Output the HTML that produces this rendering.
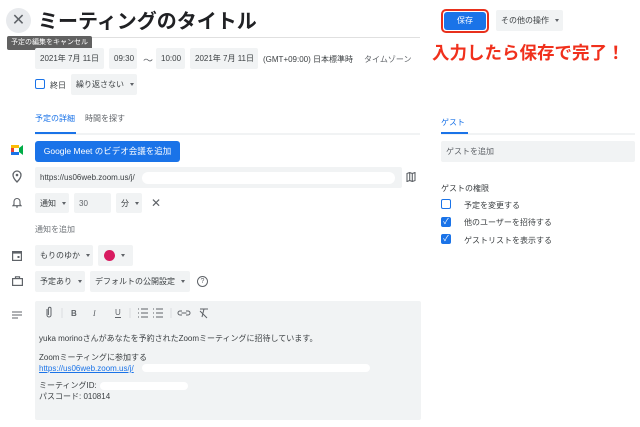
<!DOCTYPE html>
<html><head><meta charset="utf-8"><style>
*{margin:0;padding:0;box-sizing:border-box}
body{width:640px;height:427px;background:#fff;position:relative;overflow:hidden;font-family:"Liberation Sans","Noto Sans CJK JP",sans-serif;color:#3c4043;font-size:8px}
.a{position:absolute}
.chip{position:absolute;background:#f1f3f4;border-radius:2px;display:flex;align-items:center;padding-left:5px;font-size:8px;color:#3c4043}
.car{display:inline-block;margin-left:6px;width:0;height:0;border-left:2.5px solid transparent;border-right:2.5px solid transparent;border-top:3px solid #5f6368}
.cb{position:absolute;width:10px;height:10px;border:1.5px solid #1a73e8;border-radius:2px}
.cbf{background:#1a73e8;color:#fff;font-size:8px;line-height:8px;text-align:center}
</style></head><body>
<div class="a" style="left:6px;top:8px;width:25px;height:25px;border-radius:50%;background:#e8eaed;color:#5f6368;font-size:16px;line-height:25px;text-align:center">✕</div>
<div class="a" style="left:38px;top:7px;font-size:20px;font-weight:bold;color:#202124;line-height:30px">ミーティングのタイトル</div>
<div class="a" style="left:35px;top:37px;width:385px;height:1px;background:#e0e0e0"></div>
<div class="a" style="left:7px;top:36px;width:85px;height:14px;background:#616161;color:#fff;font-size:7px;line-height:14px;text-align:center;border-radius:2px">予定の編集をキャンセル</div>
<div class="chip" style="left:35px;top:48px;width:69px;height:21px">2021年 7月 11日</div>
<div class="chip" style="left:109px;top:48px;width:28px;height:21px">09:30</div>
<div class="a" style="left:143px;top:52px;font-size:10px;color:#5f6368">〜</div>
<div class="chip" style="left:156px;top:48px;width:29px;height:21px">10:00</div>
<div class="chip" style="left:190px;top:48px;width:68px;height:21px">2021年 7月 11日</div>
<div class="a" style="left:263px;top:54px">(GMT+09:00) 日本標準時</div>
<div class="a" style="left:364px;top:54px;color:#5f6368">タイムゾーン</div>
<div class="cb" style="left:35px;top:79px"></div>
<div class="a" style="left:50px;top:80px">終日</div>
<div class="chip" style="left:71px;top:74px;width:66px;height:21px">繰り返さない<span class="car"></span></div>
<div class="a" style="left:441px;top:9px;width:48px;height:24px;border:2px solid #e8301c;border-radius:5px;padding:1px"><div style="background:#1a73e8;width:100%;height:100%;border-radius:3px;color:#fff;font-size:8px;line-height:18px;text-align:center">保存</div></div>
<div class="chip" style="left:496px;top:10px;width:67px;height:21px">その他の操作<span class="car"></span></div>
<div class="a" style="left:432px;top:40px;font-size:17.5px;font-weight:bold;color:#f0301c">入力したら保存で完了！</div>
<div class="a" style="left:35px;top:113px;color:#1a73e8">予定の詳細</div>
<div class="a" style="left:85px;top:113px;color:#5f6368">時間を探す</div>
<div class="a" style="left:35px;top:133px;width:385px;height:2px;background:#f1f3f4"></div>
<div class="a" style="left:35px;top:132px;width:41px;height:2px;background:#1a73e8"></div>
<div class="a" style="left:441px;top:117px;color:#1a73e8">ゲスト</div>
<div class="a" style="left:441px;top:133px;width:194px;height:2px;background:#f1f3f4"></div>
<div class="a" style="left:441px;top:132px;width:27px;height:2px;background:#1a73e8"></div>
<svg class="a" style="left:11px;top:145px" width="12" height="10" viewBox="0 0 12 10"><rect x="0" y="0" width="8" height="10" fill="#00832d"/><rect x="0" y="0" width="8" height="3" fill="#fbbc04"/><rect x="0" y="3" width="3" height="4" fill="#ea4335"/><rect x="0" y="7" width="8" height="3" fill="#1a73e8"/><rect x="3" y="3" width="5" height="4" fill="#fff"/><path d="M8 3l4-3v10l-4-3z" fill="#00ac47"/></svg>
<div class="a" style="left:35px;top:141px;width:145px;height:21px;background:#1a73e8;border-radius:3px;color:#fff;font-size:8.5px;line-height:21px;text-align:center">Google Meet のビデオ会議を追加</div>
<svg class="a" style="left:12px;top:170px" width="10" height="13" viewBox="0 0 10 13"><path d="M5 1a4 4 0 0 1 4 4c0 3-4 7-4 7S1 8 1 5a4 4 0 0 1 4-4z" fill="none" stroke="#5f6368" stroke-width="1.3"/><circle cx="5" cy="5" r="1.3" fill="#5f6368"/></svg>
<div class="chip" style="left:35px;top:167px;width:367px;height:21px">https://us06web.zoom.us/j/</div>
<div class="a" style="left:142px;top:172px;width:253px;height:12px;background:#fff;border-radius:6px"></div>
<svg class="a" style="left:406px;top:172px" width="10" height="10" viewBox="0 0 10 10"><path d="M1 1.5l2.7-1 2.6 1 2.7-1v8l-2.7 1-2.6-1-2.7 1z M3.7 .5v8 M6.3 1.5v8" fill="none" stroke="#5f6368" stroke-width="1.1"/></svg>
<svg class="a" style="left:12px;top:197px" width="10" height="12" viewBox="0 0 10 12"><path d="M5 1.5a3 3 0 0 1 3 3v3l1 1.2H1L2 7.5v-3a3 3 0 0 1 3-3z M4 10h2" fill="none" stroke="#5f6368" stroke-width="1.1"/></svg>
<div class="chip" style="left:35px;top:193px;width:34px;height:20px">通知<span class="car"></span></div>
<div class="chip" style="left:74px;top:193px;width:37px;height:20px;color:#5f6368">30</div>
<div class="chip" style="left:116px;top:193px;width:26px;height:20px">分<span class="car"></span></div>
<div class="a" style="left:151px;top:196px;font-size:12px;color:#5f6368">✕</div>
<div class="a" style="left:35px;top:224px;color:#70757a">通知を追加</div>
<svg class="a" style="left:12px;top:250px" width="10" height="11" viewBox="0 0 10 11"><rect x="0.6" y="1.6" width="8.8" height="8.8" fill="none" stroke="#5f6368" stroke-width="1.2"/><rect x="0.6" y="1.6" width="8.8" height="2" fill="#5f6368"/><rect x="5.5" y="6" width="2" height="2" fill="#5f6368"/></svg>
<div class="chip" style="left:35px;top:245px;width:58px;height:21px">もりのゆか<span class="car"></span></div>
<div class="chip" style="left:98px;top:245px;width:35px;height:21px"><span style="display:inline-block;width:11px;height:11px;border-radius:50%;background:#d81b60;margin-left:1px"></span><span class="car"></span></div>
<svg class="a" style="left:12px;top:276px" width="11" height="10" viewBox="0 0 11 10"><rect x="0.6" y="2.6" width="9.8" height="6.8" fill="none" stroke="#5f6368" stroke-width="1.2"/><path d="M3.5 2.6V.8h4v1.8" fill="none" stroke="#5f6368" stroke-width="1.2"/></svg>
<div class="chip" style="left:35px;top:271px;width:50px;height:21px">予定あり<span class="car"></span></div>
<div class="chip" style="left:90px;top:271px;width:100px;height:21px">デフォルトの公開設定<span class="car"></span></div>
<div class="a" style="left:197px;top:276px;width:11px;height:11px;border:1.2px solid #5f6368;border-radius:50%;font-size:7px;line-height:9px;text-align:center;color:#5f6368">?</div>
<svg class="a" style="left:12px;top:311px" width="10" height="8" viewBox="0 0 10 8"><path d="M0 1h10M0 4h10M0 7h6" stroke="#5f6368" stroke-width="1.1"/></svg>
<div class="a" style="left:35px;top:301px;width:386px;height:119px;background:#f1f3f4;border-radius:2px"></div>
<svg class="a" style="left:44px;top:306px" width="180" height="14" viewBox="0 0 180 14" fill="none" stroke="#5f6368" stroke-width="1">
<path d="M3 3v6a2 2 0 0 0 4 0V2.5a1.3 1.3 0 0 0-2.6 0V9"/>
<path d="M18 2v10" stroke="#dadce0"/>
<text x="27" y="10" font-size="8" font-weight="bold" fill="#5f6368" stroke="none" font-family="Liberation Sans">B</text>
<text x="49" y="10" font-size="8" font-style="italic" fill="#5f6368" stroke="none" font-family="Liberation Serif">I</text>
<text x="71" y="9" font-size="8" fill="#5f6368" stroke="none" font-family="Liberation Sans">U</text><path d="M71 11.5h6"/>
<path d="M86 2v10" stroke="#dadce0"/>
<path d="M97 3h7M97 7h7M97 11h7M94 3h1M94 7h1M94 11h1"/>
<path d="M112 3h7M112 7h7M112 11h7M109 3h1M109 7h1M109 11h1"/>
<path d="M127 2v10" stroke="#dadce0"/>
<path d="M138 5h-2a2 2 0 0 0 0 4h2M142 5h2a2 2 0 0 1 0 4h-2M137.5 7h5"/>
<path d="M156 3h8M160 3l-2 8M156 5l7 7"/>
</svg>
<div class="a" style="left:39px;top:333px;line-height:11px;color:#3c4043">yuka morinoさんがあなたを予約されたZoomミーティングに招待しています。</div>
<div class="a" style="left:39px;top:352px;line-height:11px">Zoomミーティングに参加する<br><span style="color:#1a73e8;text-decoration:underline">https://us06web.zoom.us/j/</span></div>
<div class="a" style="left:142px;top:364px;width:228px;height:8px;background:#fff;border-radius:4px"></div>
<div class="a" style="left:39px;top:380px;line-height:11px">ミーティングID:<br>パスコード: 010814</div>
<div class="a" style="left:100px;top:382px;width:88px;height:8px;background:#fff;border-radius:4px"></div>
<div class="a" style="left:441px;top:141px;width:194px;height:21px;background:#f1f3f4;border-radius:2px;padding-left:5px;line-height:21px;color:#5f6368">ゲストを追加</div>
<div class="a" style="left:441px;top:183px">ゲストの権限</div>
<div class="cb" style="left:441px;top:199px"></div><div class="a" style="left:464px;top:200px">予定を変更する</div>
<div class="cb cbf" style="left:441px;top:217px">✓</div><div class="a" style="left:464px;top:217px">他のユーザーを招待する</div>
<div class="cb cbf" style="left:441px;top:234px">✓</div><div class="a" style="left:464px;top:235px">ゲストリストを表示する</div>
</body></html>
